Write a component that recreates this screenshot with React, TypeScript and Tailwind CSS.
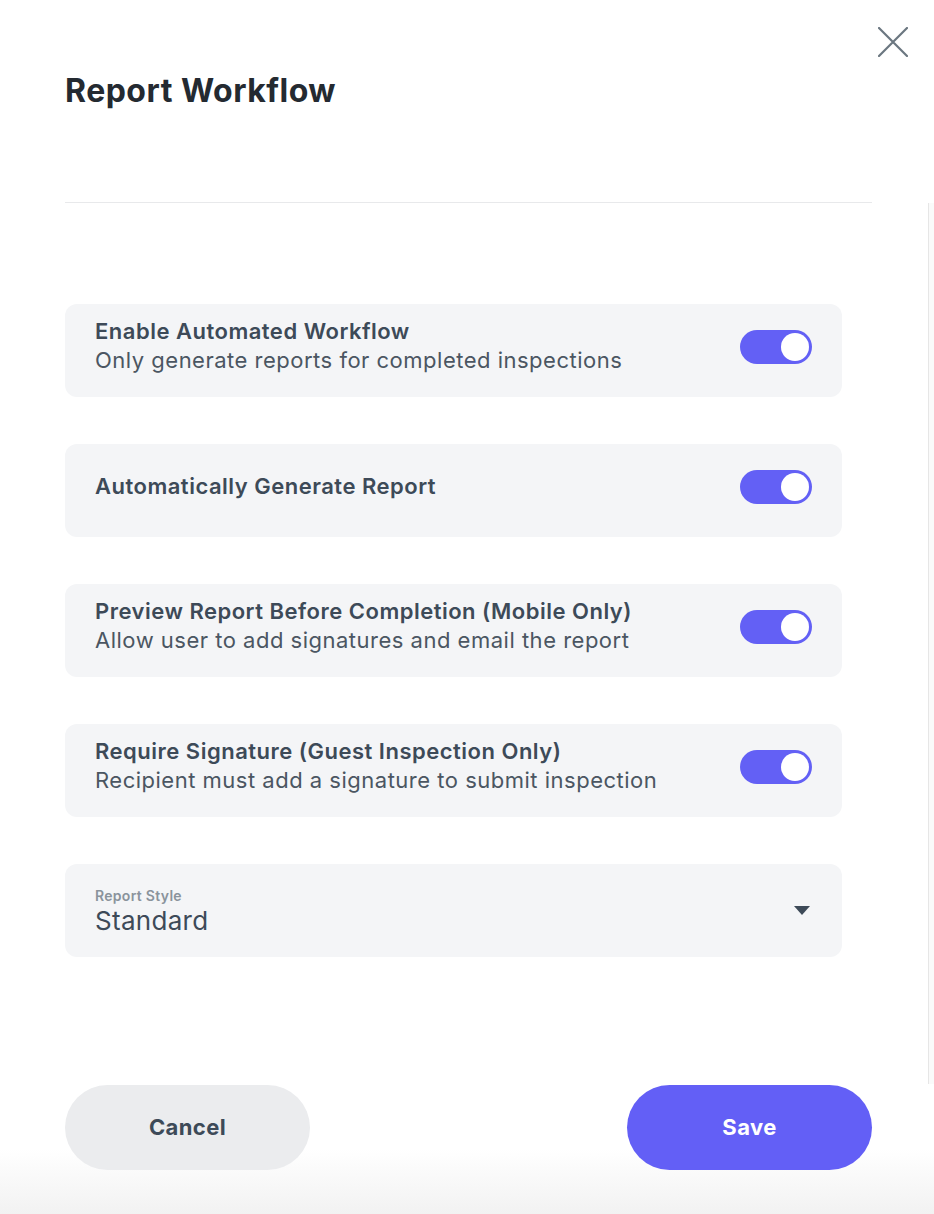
import React, { useState } from "react";

type Setting = {
  id: string;
  title: string;
  subtitle?: string;
};

const settings: Setting[] = [
  {
    id: "automated",
    title: "Enable Automated Workflow",
    subtitle: "Only generate reports for completed inspections",
  },
  { id: "generate", title: "Automatically Generate Report" },
  {
    id: "preview",
    title: "Preview Report Before Completion (Mobile Only)",
    subtitle: "Allow user to add signatures and email the report",
  },
  {
    id: "signature",
    title: "Require Signature (Guest Inspection Only)",
    subtitle: "Recipient must add a signature to submit inspection",
  },
];

const Toggle: React.FC<{ on: boolean; onChange: () => void }> = ({ on, onChange }) => (
  <button
    onClick={onChange}
    className={`-mt-[7px] flex h-[34px] w-[72px] shrink-0 items-center rounded-full px-[3px] ${
      on ? "justify-end bg-[#6360f5]" : "justify-start bg-[#cfd3d8]"
    }`}
  >
    <span className="h-[28px] w-[28px] rounded-full bg-white" />
  </button>
);

const App: React.FC = () => {
  const [values, setValues] = useState<Record<string, boolean>>({
    automated: true,
    generate: true,
    preview: true,
    signature: true,
  });

  return (
    <div className="flex h-[1214px] w-[934px] flex-col overflow-hidden bg-white font-['Inter',sans-serif]">
      {/* header */}
      <div className="flex items-start justify-between pl-[65px] pr-[26px]">
        <h1 className="pt-[71px] text-[32px] font-bold leading-[40px] tracking-[0.5px] text-[#242a31]">
          Report Workflow
        </h1>
        <button className="mt-[27px] text-[#6b7780]">
          <svg width="30" height="30" viewBox="0 0 30 30" fill="none" stroke="currentColor" strokeWidth="2.2" strokeLinecap="round">
            <path d="M1 1L29 29M29 1L1 29" />
          </svg>
        </button>
      </div>

      <div className="ml-[65px] mr-[62px] mt-[91px] h-px bg-[#e8e9eb]" />

      {/* scroll area */}
      <div className="flex h-[881px] shrink-0">
        <div className="flex flex-1 flex-col gap-[47px] pl-[65px] pr-[86px] pt-[101px]">
          {settings.map((s) => (
            <div
              key={s.id}
              className="flex h-[93px] items-center justify-between rounded-[12px] bg-[#f4f5f7] pl-[30px] pr-[30px]"
            >
              <div className="-mt-[9px] flex flex-col text-[22px] leading-[29px] tracking-[0.5px]">
                <span className="font-semibold text-[#3d4a58]">{s.title}</span>
                {s.subtitle && <span className="text-[#4b5662]">{s.subtitle}</span>}
              </div>
              <Toggle
                on={values[s.id]}
                onChange={() => setValues({ ...values, [s.id]: !values[s.id] })}
              />
            </div>
          ))}

          <div className="flex h-[93px] items-center justify-between rounded-[12px] bg-[#f4f5f7] pl-[30px] pr-[32px]">
            <div className="flex flex-col pt-[2px]">
              <span className="text-[14px] font-semibold leading-[18px] tracking-[0.3px] text-[#8a939c]">
                Report Style
              </span>
              <span className="text-[26px] leading-[32px] tracking-[0.3px] text-[#3d4a58]">Standard</span>
            </div>
            <svg width="16" height="9" viewBox="0 0 16 9" className="text-[#3d4a58]">
              <path d="M0 0H16L8 9Z" fill="currentColor" />
            </svg>
          </div>
        </div>
        <div className="w-[6px] border-l border-[#e6e6e6] bg-[#fafafa]" />
      </div>

      {/* footer */}
      <div className="flex flex-1 items-start justify-between bg-[linear-gradient(to_bottom,#ffffff_50%,#f2f2f2)] pl-[65px] pr-[62px] pt-px">
        <button className="h-[85px] w-[245px] rounded-full bg-[#ebecee] text-[22px] font-bold tracking-[0.4px] text-[#3d4a58]">
          Cancel
        </button>
        <button className="h-[85px] w-[245px] rounded-full bg-[#635ff6] text-[22px] font-bold tracking-[0.4px] text-white">
          Save
        </button>
      </div>
    </div>
  );
};

export default App;
